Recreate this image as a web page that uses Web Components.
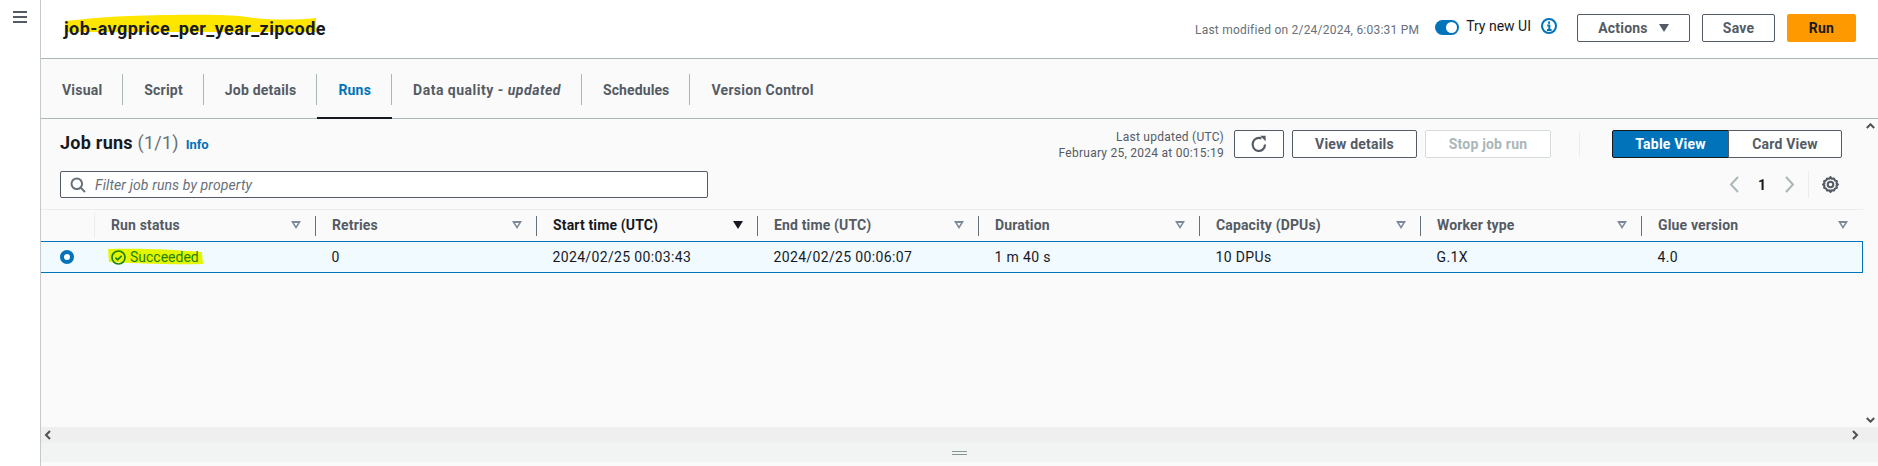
<!DOCTYPE html>
<html>
<head>
<meta charset="utf-8">
<title>job-avgprice_per_year_zipcode</title>
<style>
    html, body { margin: 0; height: 466px; overflow: hidden; background: #fff; }
    body { font-family: Roboto, "Liberation Sans", sans-serif; color: #16191f; }
</style>
</head>
<body>
<glue-app></glue-app>

<script>
class GlueButton extends HTMLElement {
    constructor() {
        super();
        this.attachShadow({ mode: 'open' });
        this.shadowRoot.innerHTML = `
        <style>
            :host {
                display: inline-flex;
                align-items: center;
                justify-content: center;
                gap: 11px;
                box-sizing: border-box;
                height: 28px;
                border: 1px solid #545b64;
                border-radius: 2px;
                background: #fff;
                color: #545b64;
                font-size: 14px;
                font-weight: 700;
                letter-spacing: .2px;
            }
            :host([primary]) { background: #ff9900; border-color: #ff9900; color: #16191f; }
            :host([disabled]) { border-color: #d5dbdb; color: #aab7b8; }
            :host([pressed]) { background: #0073bb; border-color: #16191f; color: #fff; }
        </style>
        <slot></slot>
    `;
    }
}

class GlueHeader extends HTMLElement {
    constructor() {
        super();
        this.attachShadow({ mode: 'open' });
        this.shadowRoot.innerHTML = `
        <style>
            :host {
                display: flex;
                align-items: center;
                box-sizing: border-box;
                height: 59px;
                padding: 0 22px 2px 23px;
                background: #fff;
                border-bottom: 1px solid #aab7b8;
            }
            .title {
                position: relative;
                isolation: isolate;
                font-size: 18px;
                font-weight: 700;
                letter-spacing: .4px;
                margin-right: auto;
            }
            .title svg { position: absolute; left: 0; top: -4px; z-index: -1; }
            .modified { font-size: 12px; letter-spacing: .22px; color: #687078; margin: 3px 16px 0 0; }
            .toggle {
                box-sizing: border-box;
                width: 24px;
                height: 15px;
                margin: -2px 7px 0 0;
                padding: 2px 2px 2px 11px;
                border-radius: 8px;
                background: #0073bb;
            }
            .toggle i { display: block; width: 11px; height: 11px; border-radius: 50%; background: #fff; }
            .try { font-size: 14px; margin: -4px 10px 0 0; }
            .info { margin: -4px 20px 0 0; }
            glue-button + glue-button { margin-left: 12px; }
            .actions { width: 113px; }
            .save { width: 73px; }
            .run { width: 69px; }
            .caret { width: 0; height: 0; border: 5.5px solid transparent; border-top: 8px solid #545b64; border-bottom: 0; }
        </style>
        <div class="title">
            <svg width="254" height="20" viewBox="0 0 254 20"><path d="M1 7 C30 4 45 2 100 1 C150 0 175 1 190 4 C210 6 230 6 252 4 L252 18 L1 18 Z" fill="#ffe600"/></svg>
            job-avgprice_per_year_zipcode
        </div>
        <span class="modified">Last modified on 2/24/2024, 6:03:31 PM</span>
        <div class="toggle"><i></i></div>
        <span class="try">Try new UI</span>
        <svg class="info" width="16" height="16" viewBox="0 0 16 16" fill="none"><circle cx="8" cy="8" r="7" stroke="#0073bb" stroke-width="2"/><path d="M8 3.6v2.2M6.2 7.4H8.3v4.4M6 12h4.6" stroke="#0073bb" stroke-width="2"/></svg>
        <glue-button class="actions">Actions <span class="caret"></span></glue-button>
        <glue-button class="save">Save</glue-button>
        <glue-button class="run" primary>Run</glue-button>
    `;
    }
}

class GlueTabs extends HTMLElement {
    constructor() {
        super();
        this.attachShadow({ mode: 'open' });
        this.shadowRoot.innerHTML = `
        <style>
            :host {
                display: flex;
                align-items: stretch;
                box-sizing: border-box;
                height: 60px;
                padding: 15px 0 13px 0;
                background: #fafafa;
                border-bottom: 1px solid #aab7b8;
                color: #545b64;
                font-size: 14px;
                font-weight: 700;
                letter-spacing: .2px;
            }
            .tab {
                position: relative;
                display: flex;
                align-items: center;
                padding: 0 20px 0 21px;
                border-right: 1px solid #aab7b8;
                white-space: pre;
            }
            .tab:last-child { border-right: 0; letter-spacing: .3px; }
            .wide { letter-spacing: .5px; }
            .schedules { letter-spacing: .1px; }
            .active { color: #0073bb; }
            .active::after {
                content: '';
                position: absolute;
                left: 0;
                right: -1px;
                bottom: -14px;
                height: 2px;
                background: #16191f;
            }
        </style>
        <div class="tab">Visual</div>
        <div class="tab">Script</div>
        <div class="tab">Job details</div>
        <div class="tab active">Runs</div>
        <div class="tab wide">Data quality - <em>updated</em></div>
        <div class="tab schedules">Schedules</div>
        <div class="tab">Version Control</div>
    `;
    }
}

class RunsToolbar extends HTMLElement {
    constructor() {
        super();
        this.attachShadow({ mode: 'open' });
        this.shadowRoot.innerHTML = `
        <style>
            :host { display: block; box-sizing: border-box; height: 90px; padding: 11px 0 0 19px; }
            .top, .bottom { display: flex; align-items: center; }
            .top { height: 28px; padding-right: 21px; }
            .bottom { height: 27px; margin-top: 13px; padding-right: 24px; }
            h2 { margin: 0 auto 4px 0; font-size: 18px; font-weight: 700; letter-spacing: .25px; }
            h2 span { font-weight: 400; color: #687078; }
            h2 a { margin-left: 2px; font-size: 13px; color: #0073bb; font-weight: 700; letter-spacing: 0; }
            .updated { text-align: right; font-size: 12px; letter-spacing: .25px; line-height: 16px; color: #545b64; margin: 1px 10px 0 0; }
            .refresh { width: 50px; }
            .details { width: 125px; margin-left: 8px; }
            .stop { width: 126px; margin-left: 8px; }
            .sep { width: 1px; height: 25px; background: #eaeded; margin: 0 32px 0 28px; }
            .view { display: flex; }
            .table { width: 117px; border-radius: 2px 0 0 2px; }
            .card { width: 114px; margin-left: -1px; border-radius: 0 2px 2px 0; }
            .filter {
                display: flex;
                align-items: center;
                gap: 9px;
                box-sizing: border-box;
                width: 648px;
                height: 27px;
                padding: 0 9px;
                background: #fff;
                border: 1px solid #545b64;
                border-radius: 2px;
                margin-right: auto;
            }
            .filter span { font-size: 14px; font-style: italic; color: #687078; letter-spacing: .12px; }
            .page { font-size: 14px; font-weight: 700; margin: 0 19px 0 19px; }
            .psep { width: 1px; height: 27px; background: #eaeded; margin: 0 13px 0 13px; }
        </style>
        <div class="top">
            <h2>Job runs <span>(1/1)</span> <a>Info</a></h2>
            <div class="updated">Last updated (UTC)<br>February 25, 2024 at 00:15:19</div>
            <glue-button class="refresh"><svg width="18" height="18" viewBox="0 0 18 18" fill="none"><path d="M15 9.5A6.2 6.5 0 1 1 11.4 3.6" stroke="#545b64" stroke-width="2.2"/><path d="M10 .8h5.6v5.4z" fill="#545b64"/></svg></glue-button>
            <glue-button class="details">View details</glue-button>
            <glue-button class="stop" disabled>Stop job run</glue-button>
            <div class="sep"></div>
            <div class="view">
                <glue-button class="table" pressed>Table View</glue-button>
                <glue-button class="card">Card View</glue-button>
            </div>
        </div>
        <div class="bottom">
            <div class="filter">
                <svg width="16" height="16" viewBox="0 0 16 16" fill="none"><circle cx="6.8" cy="6.8" r="5.3" stroke="#687078" stroke-width="2"/><path d="M10.6 10.6 15 15" stroke="#687078" stroke-width="2"/></svg>
                <span>Filter job runs by property</span>
            </div>
            <svg width="10" height="17" viewBox="0 0 10 17" fill="none"><path d="M9 1 2 8.5 9 16" stroke="#aab7b8" stroke-width="2"/></svg>
            <span class="page">1</span>
            <svg width="10" height="17" viewBox="0 0 10 17" fill="none"><path d="M1 1l7 7.5L1 16" stroke="#aab7b8" stroke-width="2"/></svg>
            <div class="psep"></div>
            <svg width="17" height="17" viewBox="0 0 16 16" fill="none"><path d="M8 1l1.2 1.6 2-.3.9 1.8 1.9.8-.3 2L15 8l-1.3 1.1.3 2-1.9.8-.9 1.8-2-.3L8 15l-1.2-1.6-2 .3-.9-1.8-1.9-.8.3-2L1 8l1.3-1.1-.3-2 1.9-.8.9-1.8 2 .3z" stroke="#545b64" stroke-width="2" stroke-linejoin="round"/><circle cx="8" cy="8" r="2.6" stroke="#545b64" stroke-width="1.9"/></svg>
        </div>
    `;
    }
}

class RunsTable extends HTMLElement {
    constructor() {
        super();
        this.attachShadow({ mode: 'open' });
        const cols = ['Run status', 'Retries', 'Start time (UTC)', 'End time (UTC)', 'Duration', 'Capacity (DPUs)', 'Worker type', 'Glue version'];
        const vals = ['', '0', '2024/02/25 00:03:43', '2024/02/25 00:06:07', '1 m 40 s', '10 DPUs', 'G.1X', '4.0'];
        const head = cols.map((c, i) => `
            <div class="th ${i === 2 ? 'sorted' : ''}"><span>${c}</span><i class="arrow"></i></div>`).join('');
        const cells = vals.map((v, i) => i === 0 ? `
            <div class="td status">
                <svg class="mark" width="96" height="17" viewBox="0 0 96 17"><path d="M1 1 C30 0 60 1 95 4 L96 16 C60 17 30 15 2 14 Z" fill="#e4f500"/></svg>
                <svg width="15" height="15" viewBox="0 0 15 15" fill="none"><circle cx="7.5" cy="7.5" r="6.5" stroke="#1d8102" stroke-width="1.7"/><path d="M4.4 7.6l2.2 2.2 4-4" stroke="#1d8102" stroke-width="1.7"/></svg>
                <span>Succeeded</span>
            </div>` : `
            <div class="td">${v}</div>`).join('');
        this.shadowRoot.innerHTML = `
        <style>
            :host { display: block; font-size: 14px; --cols: 53px repeat(8, 221px); }
            .head {
                display: grid;
                grid-template-columns: var(--cols);
                align-items: center;
                box-sizing: border-box;
                height: 32px;
                border-top: 1px solid #eaeded;
            }
            .selector { height: 25px; }
            .th {
                display: flex;
                align-items: center;
                justify-content: space-between;
                box-sizing: border-box;
                height: 20px;
                padding: 0 14px 1px 16px;
                border-left: 1px solid #687078;
                color: #545b64;
                font-weight: 700;
                letter-spacing: .15px;
            }
            .th:nth-child(2) { border-left-color: #eaeded; height: 25px; }
            .sorted { color: #16191f; }
            .arrow { width: 0; height: 0; border: 5px solid transparent; border-top: 8px solid #7d8998; border-bottom: 0; position: relative; }
            .arrow::after { content: ''; position: absolute; left: -2px; top: -6.5px; border: 2px solid transparent; border-top: 3px solid #fafafa; border-bottom: 0; }
            .sorted .arrow { border-top-color: #16191f; }
            .sorted .arrow::after { display: none; }
            .row {
                display: grid;
                grid-template-columns: var(--cols);
                align-items: center;
                box-sizing: border-box;
                height: 32px;
                background: #f1faff;
                border: 1px solid #0073bb;
                border-width: 1px 1px 1px 0;
            }
            .radio { box-sizing: border-box; width: 14px; height: 14px; margin-left: 19px; border-radius: 50%; border: 4px solid #0073bb; background: #fff; }
            .td { padding-left: 16.5px; letter-spacing: .35px; white-space: nowrap; }
            .status { position: relative; isolation: isolate; display: flex; align-items: center; gap: 4px; color: #1d8102; letter-spacing: 0; padding-left: 17px; }
            .mark { position: absolute; left: 13px; top: -1px; z-index: -1; }
        </style>
        <div class="head"><div class="selector"></div>${head}</div>
        <div class="row"><div class="radio"></div>${cells}</div>
    `;
    }
}

class GlueScrollArea extends HTMLElement {
    constructor() {
        super();
        this.attachShadow({ mode: 'open' });
        this.shadowRoot.innerHTML = `
        <style>
            :host { display: grid; grid-template-columns: 1fr 15px; grid-template-rows: 1fr 16px; height: 100%; min-height: 0; }
            .body { background: #fafafa; min-width: 0; overflow: hidden; }
            .v { display: flex; flex-direction: column; align-items: center; justify-content: space-between; padding: 4px 0; background: #fafafa; box-sizing: border-box; }
            .h { grid-column: 1 / 3; display: flex; align-items: center; justify-content: space-between; padding: 0 19px 0 3px; background: #efefef; }
        </style>
        <div class="body"><slot></slot></div>
        <div class="v">
            <svg width="9" height="6" viewBox="0 0 9 6" fill="none"><path d="M.8 5 4.5 1.3 8.2 5" stroke="#505050" stroke-width="2"/></svg>
            <svg width="9" height="6" viewBox="0 0 9 6" fill="none"><path d="M.8 1 4.5 4.7 8.2 1" stroke="#505050" stroke-width="2"/></svg>
        </div>
        <div class="h">
            <svg width="7" height="10" viewBox="0 0 7 10" fill="none"><path d="M6 1 2 5l4 4" stroke="#505050" stroke-width="2"/></svg>
            <svg width="7" height="10" viewBox="0 0 7 10" fill="none"><path d="M1 1l4 4-4 4" stroke="#505050" stroke-width="2"/></svg>
        </div>
    `;
    }
}

class GlueApp extends HTMLElement {
    constructor() {
        super();
        this.attachShadow({ mode: 'open' });
        this.shadowRoot.innerHTML = `
        <style>
            :host { display: grid; grid-template-columns: 41px 1fr; width: 1878px; height: 466px; overflow: hidden; }
            .nav { box-sizing: border-box; padding: 11px 0 0 13px; background: #fff; border-right: 1px solid #c4c9cc; }
            .nav i { display: block; width: 14px; height: 2px; margin-bottom: 3px; background: #545b64; }
            .main { display: grid; grid-template-rows: 59px 60px 1fr 19px 4px; min-width: 0; min-height: 0; }
            .drag { display: flex; flex-direction: column; align-items: center; justify-content: center; gap: 2px; background: #f2f3f3; }
            .drag i { display: block; width: 15px; height: 1px; background: #879596; }
            .end { background: #fafafa; }
        </style>
        <div class="nav"><i></i><i></i><i></i></div>
        <div class="main">
            <glue-header></glue-header>
            <glue-tabs></glue-tabs>
            <glue-scroll-area>
                <runs-toolbar></runs-toolbar>
                <runs-table></runs-table>
            </glue-scroll-area>
            <div class="drag"><i></i><i></i></div>
            <div class="end"></div>
        </div>
    `;
    }
}

customElements.define('glue-button', GlueButton);
customElements.define('glue-header', GlueHeader);
customElements.define('glue-tabs', GlueTabs);
customElements.define('runs-toolbar', RunsToolbar);
customElements.define('runs-table', RunsTable);
customElements.define('glue-scroll-area', GlueScrollArea);
customElements.define('glue-app', GlueApp);
</script>
</body>
</html>
